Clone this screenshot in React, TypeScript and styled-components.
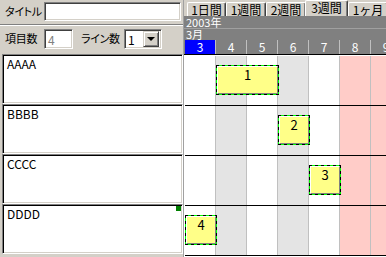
import styled, { createGlobalStyle } from 'styled-components'

const GlobalStyle = createGlobalStyle`
  html, body { margin: 0; padding: 0; background: #d4d0c8; }
  body {
    font-family: "Noto Sans CJK JP", "Noto Sans", sans-serif;
    font-size: 12px;
    color: #000;
  }
`

const COL = 31

const tabs = [
  { label: '1日間', width: 39 },
  { label: '1週間', width: 40 },
  { label: '2週間', width: 40 },
  { label: '3週間', width: 43, active: true },
  { label: '1ヶ月', width: 40 },
]

const days = [
  { d: 3, kind: 'sel' },
  { d: 4, kind: 'alt' },
  { d: 5, kind: 'plain' },
  { d: 6, kind: 'alt' },
  { d: 7, kind: 'plain' },
  { d: 8, kind: 'off' },
  { d: 9, kind: 'off' },
]

const items = [
  { name: 'AAAA', bar: { no: 1, col: 1, span: 2 } },
  { name: 'BBBB', bar: { no: 2, col: 3, span: 1 } },
  { name: 'CCCC', bar: { no: 3, col: 4, span: 1 } },
  { name: 'DDDD', bar: { no: 4, col: 0, span: 1 }, marked: true },
]

const Window = styled.div`
  display: flex;
  width: 386px;
  height: 257px;
  overflow: hidden;
  background: #d4d0c8;
`

const SidePanel = styled.div`
  width: 183px;
  flex: none;
  display: flex;
  flex-direction: column;
`

const FieldRow = styled.div<{ $h: number; $top: number }>`
  display: flex;
  align-items: flex-start;
  height: ${p => p.$h}px;
  padding: ${p => p.$top}px 0 0 5px;
  box-sizing: border-box;
`

const Label = styled.span<{ $w: number; $gap?: number }>`
  width: ${p => p.$w}px;
  margin-left: ${p => p.$gap ?? 0}px;
  flex: none;
  font-size: 11px;
  line-height: 18px;
  letter-spacing: -0.3px;
  white-space: nowrap;
  font-feature-settings: "palt";
`

const Inset = styled.div<{ $w: number; $h: number }>`
  width: ${p => p.$w}px;
  height: ${p => p.$h}px;
  box-sizing: border-box;
  background: #fff;
  border-top: 1px solid #808080;
  border-left: 1px solid #808080;
  border-right: 1px solid #fff;
  border-bottom: 1px solid #fff;
  box-shadow: inset 1px 1px 0 #404040, inset -1px -1px 0 #d4d0c8;
  display: flex;
  align-items: center;
  padding-left: 3px;
  flex: none;
`

const Muted = styled.span`
  color: #808080;
`

const Select = styled(Inset)`
  justify-content: space-between;
  padding-right: 2px;
`

const DropButton = styled.div`
  width: 16px;
  height: 16px;
  box-sizing: border-box;
  background: #d4d0c8;
  border-top: 1px solid #d4d0c8;
  border-left: 1px solid #d4d0c8;
  border-right: 1px solid #404040;
  border-bottom: 1px solid #404040;
  box-shadow: inset 1px 1px 0 #fff, inset -1px -1px 0 #808080;
  display: flex;
  align-items: center;
  justify-content: center;
`

const Arrow = styled.div`
  width: 0;
  height: 0;
  border-left: 4px solid transparent;
  border-right: 4px solid transparent;
  border-top: 4px solid #000;
`

const Divider = styled.div`
  border-top: 1px solid #808080;
  border-bottom: 1px solid #fff;
`

const ItemList = styled.div`
  display: flex;
  flex-direction: column;
  padding: 2px 0 0 2px;
`

const Item = styled.div`
  position: relative;
  height: 50px;
  box-sizing: border-box;
  background: #fff;
  border-top: 1px solid #808080;
  border-left: 1px solid #808080;
  border-right: 1px solid #fff;
  border-bottom: 1px solid #fff;
  box-shadow: inset 1px 1px 0 #000, inset -1px -1px 0 #d4d0c8;
  padding: 2px 4px;
  line-height: 14px;
`

const Marker = styled.div`
  position: absolute;
  top: 1px;
  right: 1px;
  width: 5px;
  height: 5px;
  background: #008000;
`

const Timeline = styled.div`
  width: 203px;
  flex: none;
  display: flex;
  flex-direction: column;
  border-left: 1px solid #a0a0a0;
`

const TabStrip = styled.div`
  display: flex;
  align-items: flex-end;
  height: 16px;
  padding-left: 3px;
`

const Tab = styled.div<{ $w: number; $active?: boolean }>`
  width: ${p => p.$w}px;
  height: ${p => (p.$active ? 16 : 14)}px;
  margin-left: ${p => (p.$active ? -1 : 0)}px;
  position: relative;
  z-index: ${p => (p.$active ? 1 : 0)};
  flex: none;
  box-sizing: border-box;
  background: #d4d0c8;
  border-top: 1px solid #fff;
  border-left: 1px solid #fff;
  border-right: 1px solid #404040;
  box-shadow: inset -1px 0 0 #808080;
  border-radius: 2px 2px 0 0;
  text-align: center;
  font-size: 12px;
  line-height: 14px;
  white-space: nowrap;
`

const HeadBar = styled.div<{ $h: number }>`
  height: ${p => p.$h}px;
  background: #808080;
  color: #fff;
  font-size: 11px;
  line-height: ${p => p.$h}px;
  padding-left: 2px;
  white-space: nowrap;
`

const YearBar = styled(HeadBar)`
  border-bottom: 1px solid #a0a0a0;
`

const DayRow = styled.div`
  display: flex;
  height: 14px;
  background: #808080;
  padding-left: 1px;
  border-bottom: 1px solid #000;
`

const DayCell = styled.div<{ $sel?: boolean }>`
  width: ${COL}px;
  flex: none;
  box-sizing: border-box;
  border-right: 1px solid #c0c0c0;
  background: ${p => (p.$sel ? '#0000ff' : '#808080')};
  color: #fff;
  text-align: center;
  font-size: 12px;
  line-height: 14px;
`

const Body = styled.div`
  background: #fff;
  padding: 1px 0 0 1px;
  flex: 1;
`

const Lane = styled.div`
  position: relative;
  display: flex;
  height: 50px;
  box-sizing: border-box;
  border-bottom: 1px solid #000;
`

const shade: Record<string, string> = {
  sel: '#ffffff',
  plain: '#ffffff',
  alt: '#e4e4e4',
  off: '#ffccc8',
}

const Cell = styled.div<{ $kind: string }>`
  width: ${COL}px;
  flex: none;
  box-sizing: border-box;
  border-right: 1px solid #c0c0c0;
  background: ${p => shade[p.$kind]};
`

const dashH = 'repeating-linear-gradient(90deg, #000 0 3px, #00ff00 3px 6px)'
const dashV = 'repeating-linear-gradient(180deg, #000 0 3px, #00ff00 3px 6px)'

const Bar = styled.div`
  position: absolute;
  top: 9px;
  height: 30px;
  box-sizing: border-box;
  padding: 1px;
  background:
    ${dashH} top left / 100% 1px no-repeat,
    ${dashH} bottom left / 100% 1px no-repeat,
    ${dashV} top left / 1px 100% no-repeat,
    ${dashV} top right / 1px 100% no-repeat;
`

const BarFace = styled.div`
  height: 100%;
  box-sizing: border-box;
  background: #ffff88;
  border-top: 1px solid #fff;
  border-left: 1px solid #fff;
  border-right: 1px solid #808080;
  border-bottom: 1px solid #808080;
  text-align: center;
  font-size: 13px;
  line-height: 15px;
`

export default function App() {
  return (
    <>
      <GlobalStyle />
      <Window>
        <SidePanel>
          <FieldRow $h={24} $top={2}>
            <Label $w={39}>タイトル</Label>
            <Inset $w={137} $h={19} />
          </FieldRow>
          <Divider />
          <FieldRow $h={26} $top={3}>
            <Label $w={39}>項目数</Label>
            <Inset $w={29} $h={20}>
              <Muted>4</Muted>
            </Inset>
            <Label $w={43} $gap={8}>ライン数</Label>
            <Select $w={38} $h={20}>
              1
              <DropButton>
                <Arrow />
              </DropButton>
            </Select>
          </FieldRow>
          <ItemList>
            {items.map(it => (
              <Item key={it.name}>
                {it.name}
                {it.marked && <Marker />}
              </Item>
            ))}
          </ItemList>
        </SidePanel>
        <Timeline>
          <TabStrip>
            {tabs.map(t => (
              <Tab key={t.label} $w={t.width} $active={t.active}>
                {t.label}
              </Tab>
            ))}
          </TabStrip>
          <YearBar $h={12}>2003年</YearBar>
          <HeadBar $h={11}>3月</HeadBar>
          <DayRow>
            {days.map(d => (
              <DayCell key={d.d} $sel={d.kind === 'sel'}>
                {d.d}
              </DayCell>
            ))}
          </DayRow>
          <Body>
            {items.map(it => (
              <Lane key={it.name}>
                {days.map(d => (
                  <Cell key={d.d} $kind={d.kind} />
                ))}
                <Bar
                  style={{
                    left: it.bar.col * COL,
                    width: it.bar.span * COL + 1,
                  }}
                >
                  <BarFace>{it.bar.no}</BarFace>
                </Bar>
              </Lane>
            ))}
          </Body>
        </Timeline>
      </Window>
    </>
  )
}
